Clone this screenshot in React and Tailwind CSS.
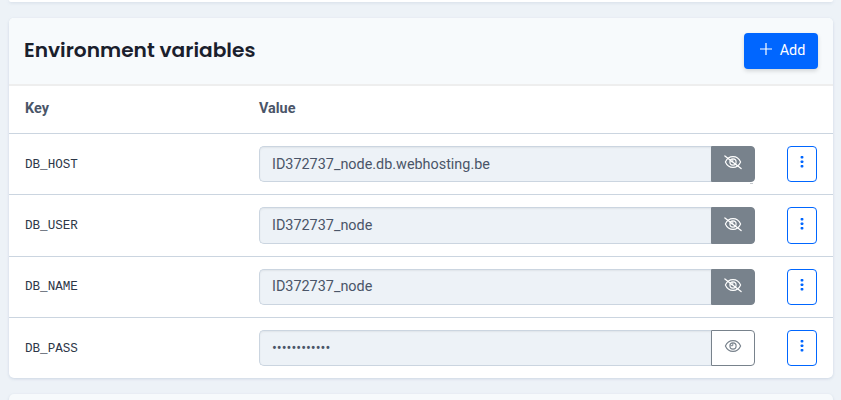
import React from "react";

const rows = [
  { key: "DB_HOST", value: "ID372737_node.db.webhosting.be", visible: true },
  { key: "DB_USER", value: "ID372737_node", visible: true },
  { key: "DB_NAME", value: "ID372737_node", visible: true },
  { key: "DB_PASS", value: "••••••••••••", visible: false },
];

function Eye({ slashed }) {
  return (
    <svg width="18" height="16" viewBox="0 0 18 16" fill="none" stroke="currentColor" strokeWidth="1.15" strokeLinecap="round" className="mb-[3.5px]">
      <path d="M1.4 8C3 4.300 5.600 2.600 9 2.600S15 4.300 16.600 8C15 11.700 12.400 13.400 9 13.400S3 11.700 1.400 8Z" />
      <circle cx="9" cy="8" r="3.100" />
      <path d="M8.800 5.500V7.700H6.800" strokeWidth="1" />
      {slashed && <path d="M.9 1.900 17.100 14.500" strokeWidth="1.300" />}
    </svg>
  );
}

function Row({ item }) {
  return (
    <div className="flex h-[61.333px] items-start border-b border-[#cbd5e0] pt-3 pl-4 last:h-[60px] last:border-b-0">
      <div className="flex h-[36.333px] w-[234px] shrink-0 items-center pt-0.5 font-['Liberation_Mono',monospace] text-[12.6px] text-[#2d3748]">
        {item.key}
      </div>
      <div className="relative flex h-[36.333px] w-[496px] shrink-0">
        <div className="flex w-[452px] items-center rounded-l-[5px] border border-r-0 border-[#cbd5e0] bg-[#edf2f7] pt-[0.8px] pl-3 text-[#4a5568] shadow-[inset_0_1px_2px_rgba(0,0,0,0.06)]">
          {item.value}
        </div>
        <button
          className={
            item.visible
              ? "flex w-11 items-center justify-center rounded-r-[4px] border border-[#78828c] bg-[#78828c] text-white"
              : "flex w-11 items-center justify-center rounded-r-[4px] border border-[#78828c] bg-white text-[#78828c]"
          }
        >
          <Eye slashed={item.visible} />
        </button>
        {item.key === "DB_HOST" && (
          <span className="absolute right-0.5 -bottom-[1.7px] h-px w-[3px] bg-[#c4c8cc]" />
        )}
      </div>
      <button className="ml-8 flex h-[36.333px] w-[30px] items-center justify-center rounded-[4px] border border-[#0066ff] bg-white text-[#0066ff]">
        <svg width="4" height="14" viewBox="0 0 4 14" fill="currentColor" className="mb-[3.5px]">
          <rect x=".6" y="1" width="2.800" height="2.500" rx=".8" />
          <rect x=".6" y="5.500" width="2.800" height="2.500" rx=".8" />
          <rect x=".6" y="10" width="2.800" height="2.500" rx=".8" />
        </svg>
      </button>
    </div>
  );
}

export default function App() {
  return (
    <div className="h-[400px] overflow-hidden bg-[#edf2f7] pr-2 pl-[9px] font-[Roboto,sans-serif] text-[14.4px]">
      <div className="h-0.5 rounded-b-[5px] bg-white shadow-[0_1px_3px_rgba(160,174,200,0.35)]" />
      <section className="mt-4 h-[360px] overflow-hidden rounded-[5px] bg-white shadow-[0_1px_3px_rgba(160,174,200,0.4)]">
        <header className="flex h-[68px] items-center justify-between border-b-2 border-[#eeeeee] bg-[#f7fafc] pr-[15px] pl-[15px]">
          <h3 className="pb-0.5 font-[Poppins,Inter,sans-serif] text-[20.16px] font-semibold text-[#1a202c]">
            Environment variables
          </h3>
          <button className="flex h-9 w-[74px] items-center justify-center gap-2 rounded-[4px] bg-[#0066ff] pl-[3px] text-white shadow-[0_2px_4px_rgba(0,0,0,0.15)]">
            <svg width="12" height="12" viewBox="0 0 12 12" stroke="currentColor" strokeWidth="1.200" className="mb-1">
              <path d="M6 0v12M0 6h12" />
            </svg>
            <span>Add</span>
          </button>
        </header>
        <div className="flex h-12 items-center border-b border-[#cbd5e0] pb-px pl-4 font-bold text-[#4a5568]">
          <div className="w-[234px]">Key</div>
          <div>Value</div>
        </div>
        <div>
          {rows.map((item) => (
            <Row key={item.key} item={item} />
          ))}
        </div>
      </section>
      <div className="mt-4 h-10 rounded-t-[5px] bg-[#f7fafc] shadow-[0_1px_3px_rgba(160,174,200,0.4)]" />
    </div>
  );
}
